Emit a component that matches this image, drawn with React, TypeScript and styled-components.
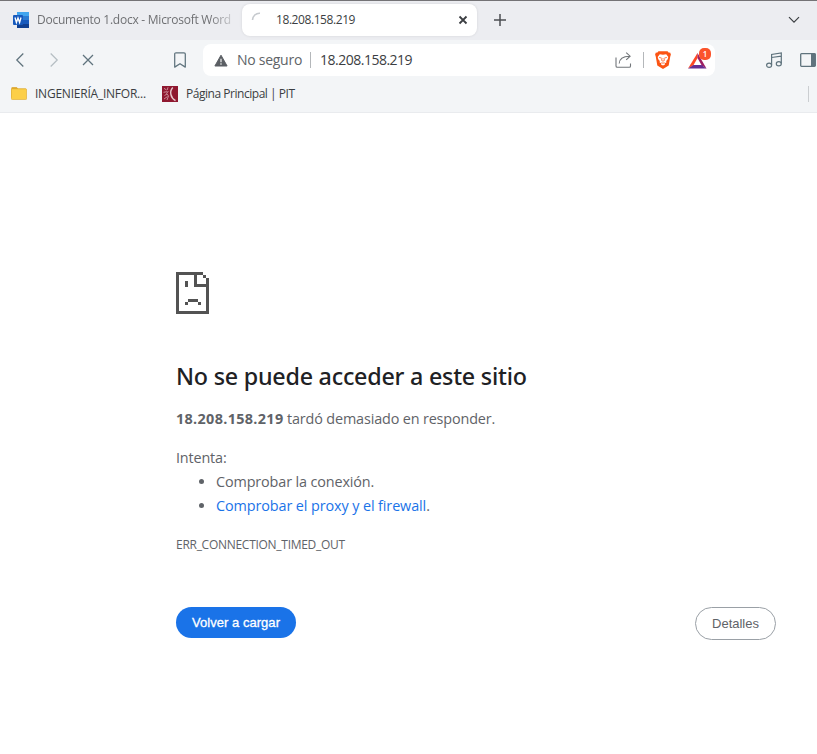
import React from "react";
import styled, { createGlobalStyle } from "styled-components";

const Global = createGlobalStyle`
  *, *::before, *::after { box-sizing: border-box; }
  html, body { margin: 0; background: #fff; }
  body { font-family: "Open Sans", "Noto Sans", sans-serif; overflow: hidden; }
  svg { display: block; flex: none; }
`;

const Window = styled.div`
  display: flex;
  flex-direction: column;
  width: 817px;
  height: 754px;
  overflow: hidden;
  background: #fff;
`;

const TabStrip = styled.header`
  display: flex;
  align-items: flex-start;
  height: 40px;
  padding-top: 3px;
  border-top: 1px solid #747376;
  background: #ecedf1;
`;

const InactiveTab = styled.div`
  display: flex;
  align-items: center;
  gap: 8px;
  width: 242px;
  height: 32px;
  padding-left: 13px;
`;

const InactiveTitle = styled.span`
  width: 197px;
  white-space: nowrap;
  font-size: 12px;
  line-height: 18px;
  letter-spacing: -0.25px;
  color: #6f7073;
  mask-image: linear-gradient(to right, #000 172px, rgba(0, 0, 0, 0.25) 195px);
`;

const ActiveTab = styled.div`
  display: flex;
  align-items: center;
  width: 235px;
  height: 32px;
  padding: 0 8px 0 9px;
  border-radius: 8px;
  background: #fff;
  box-shadow: 0 0 3px rgba(0, 0, 0, 0.1);
`;

const ActiveTitle = styled.span`
  flex: 1;
  padding-left: 9px;
  font-size: 12px;
  line-height: 18px;
  letter-spacing: -0.42px;
  color: #3b3e42;
`;

const NewTab = styled.div`
  display: flex;
  align-items: center;
  height: 32px;
  padding-left: 17px;
`;

const TabSearch = styled(NewTab)`
  margin-left: auto;
  padding: 0 17px 0 0;
`;

const Toolbar = styled.div`
  display: flex;
  align-items: center;
  height: 40px;
  background: #f3f5f7;
`;

const Navigation = styled.nav`
  display: flex;
  align-items: center;
  width: 203px;
  padding-left: 12px;
  gap: 18px;
`;

const BookmarkSlot = styled.div`
  margin-left: auto;
  padding-right: 15px;
`;

const AddressBar = styled.div`
  display: flex;
  align-items: center;
  width: 512px;
  height: 32px;
  padding: 0 2px 0 11px;
  border-radius: 8px;
  background: #fff;
`;

const Security = styled.span`
  padding-left: 9px;
  width: 82px;
  white-space: nowrap;
  font-size: 14px;
  line-height: 20px;
  letter-spacing: -0.27px;
  color: #606468;
`;

const Address = styled.span`
  flex: 1;
  padding-left: 9px;
  font-size: 14px;
  line-height: 20px;
  letter-spacing: -0.5px;
  color: #3b3e42;
`;

const Separator = styled.i<{ $space?: number }>`
  width: 1px;
  height: 16px;
  margin-left: ${(p) => p.$space ?? 0}px;
  background: #b4b7ba;
`;

const Shield = styled.div`
  margin-left: 11px;
`;

const Rewards = styled.div`
  position: relative;
  margin-left: 17px;
  padding-top: 1px;
  width: 19px;
  margin-right: 6px;
`;

const Badge = styled.span`
  position: absolute;
  left: 11px;
  top: -4px;
  width: 12px;
  height: 12px;
  border-radius: 5px;
  background: #fb542b;
  color: #fff;
  font-size: 8px;
  font-weight: 600;
  line-height: 12px;
  text-align: center;
`;

const ToolbarActions = styled.div`
  display: flex;
  align-items: center;
  gap: 18px;
  padding-left: 51px;
`;

const BookmarksBar = styled.div`
  display: flex;
  align-items: center;
  height: 33px;
  padding: 0 8px 5px 11px;
  border-bottom: 1px solid #e9ebee;
  background: #f3f5f7;
`;

const Bookmark = styled.div<{ $spacing: number; $width: number }>`
  display: flex;
  align-items: center;
  gap: 8px;
  width: ${(p) => p.$width}px;
  white-space: nowrap;
  font-size: 12px;
  line-height: 18px;
  letter-spacing: ${(p) => p.$spacing}px;
  color: #3b3e42;
`;

const BarEnd = styled(Separator)`
  margin-left: auto;
  background: #cbced1;
`;

const ErrorPage = styled.main`
  width: 776px;
  padding: 159px 0 0 176px;
  color: #5f6368;
  font-size: 14.4px;
  line-height: 24px;
`;

const Title = styled.h1`
  margin: 47px 0 16px;
  font-family: "Noto Sans", "Open Sans", sans-serif;
  font-size: 23.3px;
  font-weight: 500;
  line-height: 30px;
  letter-spacing: -0.235px;
  color: #202124;
`;

const Summary = styled.p`
  margin: 0 0 15px;
  letter-spacing: -0.15px;
`;

const Host = styled.strong`
  font-weight: 700;
  letter-spacing: 0.33px;
`;

const Hint = styled.p`
  margin: 0;
  letter-spacing: -0.16px;
`;

const Suggestions = styled.ul`
  margin: 0;
  padding-left: 40px;
  letter-spacing: -0.13px;
`;

const ProxyLink = styled.a`
  color: #1a73e8;
  letter-spacing: -0.1px;
`;

const ErrorCode = styled.div`
  margin-top: 15px;
  font-size: 12px;
  letter-spacing: -0.28px;
`;

const Actions = styled.div`
  display: flex;
  align-items: flex-start;
  justify-content: space-between;
  margin-top: 50px;
`;

const Button = styled.button`
  margin: 0;
  padding: 0;
  border: 0;
  font: 13px/15px "Liberation Sans", Arial, sans-serif;
  white-space: nowrap;
`;

const ReloadButton = styled(Button)`
  width: 120px;
  height: 31px;
  border-radius: 16px;
  background: #1a73e8;
  color: #fff;
  letter-spacing: 0.04px;
  -webkit-text-stroke: 0.3px #fff;
`;

const DetailsButton = styled(Button)`
  width: 81px;
  height: 33px;
  border: 1px solid #9aa0a6;
  border-radius: 17px;
  background: #fff;
  color: #5f6368;
`;

const WordIcon = () => (
  <svg width="16" height="16" viewBox="0 0 16 16">
    <path fill="#41a5ee" d="M4 0h12v4H4z" />
    <path fill="#2b7cd3" d="M4 4h12v4H4z" />
    <path fill="#185abd" d="M4 8h12v4H4z" />
    <path fill="#103f91" d="M4 12h12v4H4z" />
    <rect y="3" width="10" height="10" rx="1" fill="#185abd" />
    <path d="M2 5.5 3.4 10.5 5 6 6.6 10.5 8 5.5" fill="none" stroke="#fff" strokeWidth="1.3" />
  </svg>
);

const Spinner = () => (
  <svg width="16" height="16" viewBox="0 0 16 16" fill="none" stroke="#c6cace" strokeWidth="1.6">
    <path d="M1.5 8A7 7 0 0 1 9 1.2" />
  </svg>
);

const CloseTabIcon = () => (
  <svg width="12" height="12" viewBox="0 0 12 12" stroke="#3b3e42" strokeWidth="1.8">
    <path d="m2.5 2.5 7 7m0-7-7 7" />
  </svg>
);

const PlusIcon = () => (
  <svg width="12" height="12" viewBox="0 0 12 12" stroke="#4b4d51" strokeWidth="1.5">
    <path d="M0 6h12M6 0v12" />
  </svg>
);

const DownIcon = () => (
  <svg width="12" height="8" viewBox="0 0 12 8" fill="none" stroke="#3b3e42" strokeWidth="1.2">
    <path d="m1 1.2 5 5 5-5" />
  </svg>
);

const NavIcon = ({ d, color = "#5f737d" }: { d: string; color?: string }) => (
  <svg width="16" height="16" viewBox="0 0 16 16" fill="none" stroke={color} strokeWidth="1.25">
    <path d={d} />
  </svg>
);

const BookmarkIcon = () => (
  <svg width="16" height="16" viewBox="0 0 16 16" fill="none" stroke="#5f737d" strokeWidth="1.25" strokeLinejoin="round">
    <path d="M4 .8h8a1.3 1.3 0 0 1 1.3 1.3v13L8 11.7l-5.3 3.4v-13A1.3 1.3 0 0 1 4 .8Z" />
  </svg>
);

const WarningIcon = () => (
  <svg width="14" height="13" viewBox="0 0 14 13">
    <path d="M7 1.2 13.1 12H.9Z" fill="#5b5f64" stroke="#5b5f64" strokeLinejoin="round" />
    <path d="M7 4.7v3.5m0 1v1.5" stroke="#fff" strokeWidth="1.1" />
  </svg>
);

const ShareIcon = () => (
  <svg width="17" height="16" viewBox="0 0 17 16" fill="none" stroke="#72767a" strokeWidth="1.1">
    <path d="M1 5.5V14q0 1.3 1.3 1.3h12q1.2 0 1.2-1.3v-2.5M4.2 11.5c.3-4.8 3.5-7.4 10.6-7.3M11.2.7l3.9 3.5-3.9 3.6" />
  </svg>
);

const BraveIcon = () => (
  <svg width="16" height="18" viewBox="0 0 16 18">
    <path fill="#fb5413" d="m3.5.3 9-.1 1.4 1.5 1.2-.1.8 2-.7 2.2-1.5 8.6L8 17.9l-5.7-3.5L.8 5.8.1 3.6l.8-2 1.2.1Z" />
    <path fill="#fff" d="m4.8 3.2 3.2.5 3.2-.5 2.1 2.7-.6 2.3-1.5 1.9.2 1.4-1.8.8.4 1.2L8 14.6l-2-1.1.4-1.2-1.8-.8.2-1.4-1.5-1.9-.6-2.3Z" />
    <path d="m4.2 6.4 2.4.7M11.8 6.4l-2.4.7M7.1 7.2l-.5 2.2L8 10.2l1.4-.8-.5-2.2M6.4 11.7l1.6.5 1.6-.5" fill="none" stroke="#fb5413" strokeWidth=".8" />
  </svg>
);

const RewardsIcon = () => (
  <svg width="19" height="16" viewBox="0 0 19 16">
    <path fill="#ff4724" d="m9.5 0 .1 5-4.2 7.2L0 15.5Z" />
    <path fill="#9e1f63" d="M9.5 0v5l4.1 7.2 4.9 3.3Z" />
    <path fill="#662d91" d="M0 15.5h18.5l-4.9-3.4H5.4Z" />
  </svg>
);

const MusicIcon = () => (
  <svg width="16" height="16" viewBox="0 0 16 16" fill="none" stroke="#5f737d" strokeWidth="1.2">
    <path d="M5.6 13V2.4L15.3.9v10.6M5.6 5.5l9.7-1.4" />
    <ellipse cx="3.1" cy="13.2" rx="2.5" ry="2.1" />
    <ellipse cx="12.8" cy="11.8" rx="2.5" ry="2.1" />
  </svg>
);

const SidebarIcon = () => (
  <svg width="16" height="14" viewBox="0 0 16 14">
    <rect x=".7" y=".7" width="14.6" height="12.6" rx=".8" fill="none" stroke="#5f737d" strokeWidth="1.3" />
    <path fill="#5f737d" d="M11 1h4.5v12H11z" />
  </svg>
);

const FolderIcon = () => (
  <svg width="16" height="13" viewBox="0 0 16 13">
    <path fill="#d89a15" d="M.4 1Q.4.2 1.2.2h4.6l1.3 1.5H15v9H.4Z" />
    <rect x=".4" y="1.8" width="15.2" height="10.8" rx="1" fill="#fccf49" stroke="#dfad37" strokeWidth=".7" />
  </svg>
);

const PitIcon = () => (
  <svg width="16" height="16" viewBox="0 0 16 16" fill="none" stroke="#cf95a0" strokeWidth=".9">
    <path fill="#8f1830" stroke="none" d="M0 0h16v16H0z" />
    <path d="M2 2.3 4.5 4M6 1.3 5.2 4M1.5 6.3l3.5-.6M2.5 9.5 5 8M2 13l3.5-2.5M6.3 5 4.7 7.5 6.5 10 5 14" />
    <path d="M10.8 1.5C7 5.5 8.6 11.8 13.5 14.7" stroke="#e6c8cd" strokeWidth="1.4" />
  </svg>
);

const SadPageIcon = () => (
  <svg width="33" height="42" viewBox="0 0 11 14" shapeRendering="crispEdges">
    <path
      fill="#535353"
      d="M0 0h9v1H7v3h3V2h1v12H0ZM1 1v12h9V5H6V1ZM9 1h1v1H9ZM3 3h1v2H3ZM4 9h3.33v1H4ZM3 10h1v1H3ZM7.33 10h1v1h-1Z"
      fillRule="evenodd"
    />
  </svg>
);

export default function App() {
  return (
    <Window>
      <Global />
      <TabStrip>
        <InactiveTab>
          <WordIcon />
          <InactiveTitle>Documento 1.docx - Microsoft Word</InactiveTitle>
        </InactiveTab>
        <ActiveTab>
          <Spinner />
          <ActiveTitle>18.208.158.219</ActiveTitle>
          <CloseTabIcon />
        </ActiveTab>
        <NewTab>
          <PlusIcon />
        </NewTab>
        <TabSearch>
          <DownIcon />
        </TabSearch>
      </TabStrip>
      <Toolbar>
        <Navigation>
          <NavIcon d="M11.3 1.5 4.8 8l6.5 6.5" />
          <NavIcon d="M4.7 1.5 11.2 8l-6.5 6.5" color="#b5bec3" />
          <NavIcon d="m3 3 10 10M13 3 3 13" />
          <BookmarkSlot>
            <BookmarkIcon />
          </BookmarkSlot>
        </Navigation>
        <AddressBar>
          <WarningIcon />
          <Security>No seguro</Security>
          <Separator />
          <Address>18.208.158.219</Address>
          <ShareIcon />
          <Separator $space={11} />
          <Shield>
            <BraveIcon />
          </Shield>
          <Rewards>
            <RewardsIcon />
            <Badge>1</Badge>
          </Rewards>
        </AddressBar>
        <ToolbarActions>
          <MusicIcon />
          <SidebarIcon />
        </ToolbarActions>
      </Toolbar>
      <BookmarksBar>
        <Bookmark $width={151} $spacing={-0.23}>
          <FolderIcon />
          INGENIERÍA_INFOR...
        </Bookmark>
        <Bookmark $width={140} $spacing={-0.47}>
          <PitIcon />
          Página Principal | PIT
        </Bookmark>
        <BarEnd />
      </BookmarksBar>
      <ErrorPage>
        <SadPageIcon />
        <Title>No se puede acceder a este sitio</Title>
        <Summary>
          <Host>18.208.158.219</Host> tardó demasiado en responder.
        </Summary>
        <Hint>Intenta:</Hint>
        <Suggestions>
          <li>Comprobar la conexión.</li>
          <li>
            <ProxyLink>Comprobar el proxy y el firewall</ProxyLink>.
          </li>
        </Suggestions>
        <ErrorCode>ERR_CONNECTION_TIMED_OUT</ErrorCode>
        <Actions>
          <ReloadButton>Volver a cargar</ReloadButton>
          <DetailsButton>Detalles</DetailsButton>
        </Actions>
      </ErrorPage>
    </Window>
  );
}
